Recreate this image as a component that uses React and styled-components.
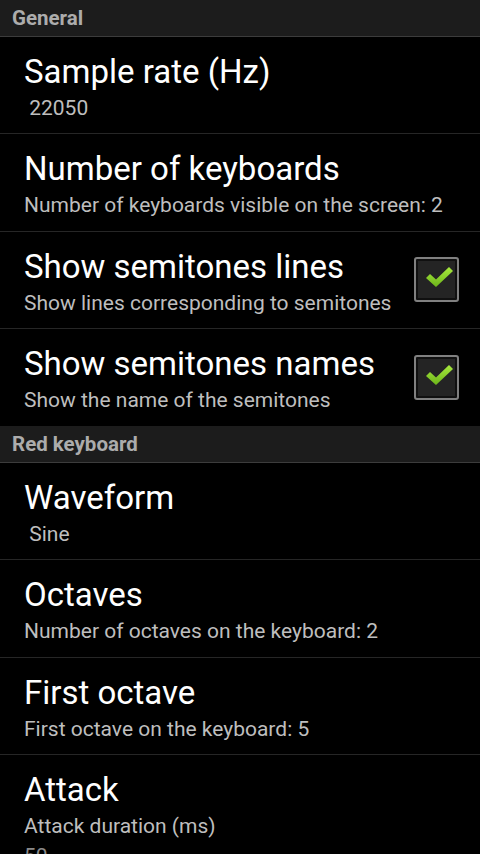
import React from 'react'
import styled, { createGlobalStyle } from 'styled-components'

const GlobalStyle = createGlobalStyle`
  html, body {
    margin: 0;
    padding: 0;
    background: #000;
  }
  body {
    font-family: Roboto, 'Noto Sans', sans-serif;
    overflow: hidden;
  }
`

const Screen = styled.div`
  width: 480px;
  height: 854px;
  overflow: hidden;
  background: #000;
  display: flex;
  flex-direction: column;
`

const SectionHeader = styled.div`
  height: 36px;
  flex-shrink: 0;
  display: flex;
  align-items: center;
  padding-left: 12px;
  background: #1c1c1c;
  border-bottom: 1px solid #3c3c3c;
  color: #acacac;
  font-size: 20.5px;
  font-weight: bold;
`

const PrefRow = styled.div`
  height: ${p => (p.$last ? '97px' : '96.33px')};
  flex-shrink: 0;
  display: flex;
  align-items: center;
  padding: 0 21px 0 24px;
  border-bottom: ${p => (p.$last ? 'none' : '1px solid #262626')};
`

const TextBlock = styled.div`
  flex: 1;
  align-self: flex-start;
  padding-top: 15px;
`

const Title = styled.div`
  color: #fff;
  font-size: 33px;
  line-height: 40px;
`

const Summary = styled.div`
  color: #bebebe;
  font-size: 21px;
  line-height: 26px;
  margin-top: 3px;
  white-space: pre;
`

const Extra = styled(Summary)`
  color: #8a8a8a;
  margin-top: 4px;
`

const CheckBox = styled.div`
  width: 41px;
  height: 41px;
  flex-shrink: 0;
  border: 2px solid #808080;
  border-radius: 3px;
  background: #242424;
  box-shadow: inset 0 0 0 2px #101010;
  display: flex;
  align-items: center;
  justify-content: center;
  svg {
    margin: 0 0 5px 5px;
  }
`

function Check () {
  return (
    <svg width='27' height='20' viewBox='0 0 27 20'>
      <defs>
        <linearGradient id='chk' x1='0' y1='0' x2='0' y2='1'>
          <stop offset='0' stopColor='#a8ea3e' />
          <stop offset='1' stopColor='#6cb41a' />
        </linearGradient>
      </defs>
      <path d='M0 11 L4 7 L10 12.5 L23 0 L27 4 L10 20 Z' fill='url(#chk)' />
    </svg>
  )
}

function Pref ({ title, summary, extra, checked, last }) {
  return (
    <PrefRow $last={last}>
      <TextBlock>
        <Title>{title}</Title>
        {summary && <Summary>{summary}</Summary>}
        {extra && <Extra>{extra}</Extra>}
      </TextBlock>
      {checked && <CheckBox><Check /></CheckBox>}
    </PrefRow>
  )
}

export default function App () {
  return (
    <Screen>
      <GlobalStyle />
      <SectionHeader>General</SectionHeader>
      <Pref title='Sample rate (Hz)' summary=' 22050' />
      <Pref title='Number of keyboards' summary='Number of keyboards visible on the screen: 2' />
      <Pref title='Show semitones lines' summary='Show lines corresponding to semitones' checked />
      <Pref title='Show semitones names' summary='Show the name of the semitones' checked last />
      <SectionHeader>Red keyboard</SectionHeader>
      <Pref title='Waveform' summary=' Sine' />
      <Pref title='Octaves' summary='Number of octaves on the keyboard: 2' />
      <Pref title='First octave' summary='First octave on the keyboard: 5' />
      <Pref title='Attack' summary='Attack duration (ms)' extra='50' last />
    </Screen>
  )
}
